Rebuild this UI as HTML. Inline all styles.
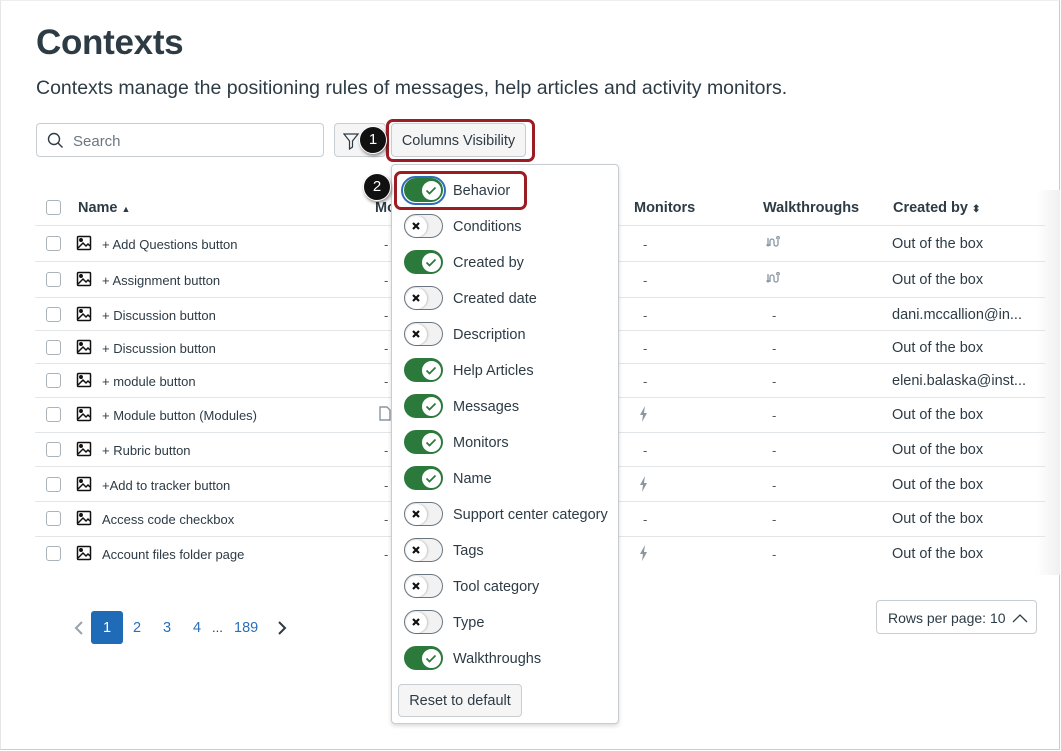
<!DOCTYPE html>
<html><head><meta charset="utf-8">
<style>
*{box-sizing:border-box;margin:0;padding:0}
body{width:1061px;height:751px;background:#fff;font-family:"Liberation Sans",sans-serif;color:#2d3b45;position:relative;overflow:hidden}
.frame{position:absolute;left:0;top:0;width:1060px;height:750px;border:1px solid #c7cdd1;border-left-color:#e6e6e6;border-top-color:#eee}
.a{position:absolute}
h1{position:absolute;left:36px;top:23px;font-size:35px;font-weight:bold;color:#2d3b45;letter-spacing:-0.3px}
.sub{left:36px;top:77px;font-size:19.5px;color:#2d3b45}
.search{left:36px;top:123px;width:288px;height:34px;border:1px solid #c7cdd1;border-radius:4px}
.search span{position:absolute;left:36px;top:9px;font-size:15px;color:#6b7780}
.btn{border:1px solid #c7cdd1;background:#f5f5f5;border-radius:4px;font-size:14.5px;color:#2d3b45;text-align:center}
.red{border:3px solid #9b1c22;border-radius:7px}
.badge{width:28px;height:28px;border-radius:50%;background:#111;color:#fff;font-size:15px;text-align:center;line-height:26px;box-shadow:1px 2px 3px rgba(0,0,0,.45);border:1.5px solid #fff}
.hd{font-size:14.5px;font-weight:bold;color:#2d3b45}
.sep{left:35px;width:1010px;height:1px;background:#e3e6e8}
.cb{left:46px;width:15px;height:15px;border:1px solid #aab3b9;border-radius:3px}
.cell{font-size:13px;color:#2d3b45}
.cb2{font-size:14.5px;color:#2d3b45}
.dash{font-size:13px;color:#555}
.menu{left:391px;top:164px;width:228px;height:560px;background:#fff;border:1px solid #c7cdd1;border-radius:4px;box-shadow:0 2px 4px rgba(0,0,0,.15)}
.tg{left:404px;width:39px;height:24px;border-radius:12px}
.on{background:#2b7a3b}
.off{background:#f2f2f2;border:1.5px solid #6b7780}
.knob{position:absolute;width:21px;height:21px;border-radius:50%;background:#fff;top:1.5px}
.on .knob{right:1.5px;border:1px solid #2b7a3b}
.off .knob{left:1px;top:0.5px;box-shadow:1px 0 2px rgba(0,0,0,.2)}
.lbl{left:453px;font-size:14.5px;color:#2d3b45}
.pg{font-size:14.5px;color:#2b6fba}
</style></head><body>
<div class="frame"></div>
<h1>Contexts</h1>
<div class="a sub">Contexts manage the positioning rules of messages, help articles and activity monitors.</div>
<div class="a search"><svg class="a" style="left:10px;top:8px" width="17" height="17" viewBox="0 0 17 17"><circle cx="7" cy="7" r="5.5" fill="none" stroke="#2d3b45" stroke-width="1.4"/><path d="M11 11l4.5 4.5" stroke="#2d3b45" stroke-width="1.4"/></svg><span>Search</span></div>
<div class="a btn" style="left:334px;top:123px;width:52px;height:34px"><svg class="a" style="left:8px;top:8px" width="16" height="18" viewBox="0 0 16 18"><path d="M1 2h14l-5.5 7v6l-3 2V9z" fill="none" stroke="#2d3b45" stroke-width="1.2"/></svg></div>
<div class="a red" style="left:386px;top:119px;width:149px;height:43px"></div>
<div class="a btn" style="left:391px;top:123px;width:135px;height:34px;line-height:34px">Columns Visibility</div>
<div class="a badge" style="left:359px;top:126px">1</div>

<div class="a hd" style="left:78px;top:200px">Name <span style="font-size:9px">▲</span></div>
<div class="a hd" style="left:375px;top:200px">Mo</div>
<div class="a hd" style="left:634px;top:200px">Monitors</div>
<div class="a hd" style="left:763px;top:200px">Walkthroughs</div>
<div class="a hd" style="left:893px;top:200px">Created by <span style="font-size:10px">⬍</span></div>
<div class="a" style="left:1036px;top:190px;width:24px;height:385px;background:linear-gradient(90deg,rgba(240,240,240,0),#f0f0f0)"></div>
<div class="a cb" style="top:200px"></div>

<div class="a sep" style="top:225px"></div><div class="a sep" style="top:261px"></div><div class="a sep" style="top:297px"></div><div class="a sep" style="top:330px"></div><div class="a sep" style="top:363px"></div><div class="a sep" style="top:397px"></div><div class="a sep" style="top:432px"></div><div class="a sep" style="top:466px"></div><div class="a sep" style="top:501px"></div><div class="a sep" style="top:536px"></div>

<div class="a cb" style="top:236px"></div><div class="a cell" style="left:102px;top:237px">+ Add Questions button</div>
<div class="a cb" style="top:272px"></div><div class="a cell" style="left:102px;top:273px">+ Assignment button</div>
<div class="a cb" style="top:307px"></div><div class="a cell" style="left:102px;top:308px">+ Discussion button</div>
<div class="a cb" style="top:340px"></div><div class="a cell" style="left:102px;top:341px">+ Discussion button</div>
<div class="a cb" style="top:373px"></div><div class="a cell" style="left:102px;top:374px">+ module button</div>
<div class="a cb" style="top:407px"></div><div class="a cell" style="left:102px;top:408px">+ Module button (Modules)</div>
<div class="a cb" style="top:442px"></div><div class="a cell" style="left:102px;top:443px">+ Rubric button</div>
<div class="a cb" style="top:477px"></div><div class="a cell" style="left:102px;top:478px">+Add to tracker button</div>
<div class="a cb" style="top:511px"></div><div class="a cell" style="left:102px;top:512px">Access code checkbox</div>
<div class="a cb" style="top:546px"></div><div class="a cell" style="left:102px;top:547px">Account files folder page</div>

<svg class="a" style="left:76px;top:235px" width="16" height="330" viewBox="0 0 16 330">
<defs><g id="im" fill="none" stroke="#111" stroke-width="1.5"><rect x="1.5" y="1.5" width="13" height="13" rx="1"/><path d="M2 13l5-5 3 3 2-2 2 2"/><circle cx="5" cy="5" r="1.2" fill="#111"/></g></defs>
<use href="#im" y="0"/><use href="#im" y="36"/><use href="#im" y="71"/><use href="#im" y="104"/><use href="#im" y="137"/><use href="#im" y="171"/><use href="#im" y="206"/><use href="#im" y="241"/><use href="#im" y="275"/><use href="#im" y="310"/>
</svg>

<div class="a dash" style="left:384px;top:237px">-</div><div class="a dash" style="left:384px;top:273px">-</div><div class="a dash" style="left:384px;top:308px">-</div><div class="a dash" style="left:384px;top:341px">-</div><div class="a dash" style="left:384px;top:374px">-</div><div class="a dash" style="left:384px;top:443px">-</div><div class="a dash" style="left:384px;top:478px">-</div><div class="a dash" style="left:384px;top:512px">-</div><div class="a dash" style="left:384px;top:547px">-</div>
<svg class="a" style="left:379px;top:406px" width="12" height="15"><path d="M1 1h7l3 3v10H1z" fill="none" stroke="#8a96a0" stroke-width="1.4"/></svg>

<div class="a dash" style="left:643px;top:237px">-</div><div class="a dash" style="left:643px;top:273px">-</div><div class="a dash" style="left:643px;top:308px">-</div><div class="a dash" style="left:643px;top:341px">-</div><div class="a dash" style="left:643px;top:374px">-</div><div class="a dash" style="left:643px;top:443px">-</div><div class="a dash" style="left:643px;top:512px">-</div>
<svg class="a" style="left:639px;top:406px" width="10" height="160" viewBox="0 0 10 160"><defs><path id="bolt" fill="#8a96a0" d="M6 0L1 9h3l-1 7 5-9H5z"/></defs><use href="#bolt"/><use href="#bolt" y="70"/><use href="#bolt" y="139"/></svg>

<svg class="a" style="left:766px;top:235px" width="16" height="50" viewBox="0 0 16 50">
<defs><path id="wk" fill="none" stroke="#8a96a0" stroke-width="1.3" d="M2 3v8M0.5 9.5L2 11l1.5-1.5M4 11V6a2 2 0 0 1 4 0v3a2 2 0 0 0 4 0V5M12 1.5a1.3 1.3 0 1 1 0 2.6a1.3 1.3 0 1 1 0-2.6"/></defs>
<use href="#wk"/><use href="#wk" y="36"/></svg>
<div class="a dash" style="left:772px;top:308px">-</div><div class="a dash" style="left:772px;top:341px">-</div><div class="a dash" style="left:772px;top:374px">-</div><div class="a dash" style="left:772px;top:408px">-</div><div class="a dash" style="left:772px;top:443px">-</div><div class="a dash" style="left:772px;top:478px">-</div><div class="a dash" style="left:772px;top:512px">-</div><div class="a dash" style="left:772px;top:547px">-</div>

<div class="a cb2" style="left:892px;top:236px">Out of the box</div>
<div class="a cb2" style="left:892px;top:272px">Out of the box</div>
<div class="a cb2" style="left:892px;top:307px">dani.mccallion@in...</div>
<div class="a cb2" style="left:892px;top:340px">Out of the box</div>
<div class="a cb2" style="left:892px;top:373px">eleni.balaska@inst...</div>
<div class="a cb2" style="left:892px;top:407px">Out of the box</div>
<div class="a cb2" style="left:892px;top:442px">Out of the box</div>
<div class="a cb2" style="left:892px;top:477px">Out of the box</div>
<div class="a cb2" style="left:892px;top:511px">Out of the box</div>
<div class="a cb2" style="left:892px;top:546px">Out of the box</div>

<svg class="a" style="left:74px;top:620px" width="10" height="16"><path d="M8 2L2 8l6 6" fill="none" stroke="#9aa3a9" stroke-width="2"/></svg>
<div class="a" style="left:91px;top:611px;width:32px;height:33px;background:#1f6bb8;border-radius:3px;color:#fff;font-size:14.5px;text-align:center;line-height:34px">1</div>
<div class="a pg" style="left:133px;top:620px">2</div>
<div class="a pg" style="left:163px;top:620px">3</div>
<div class="a pg" style="left:193px;top:620px">4</div>
<div class="a" style="left:212px;top:620px;font-size:13px;color:#2d3b45">...</div>
<div class="a pg" style="left:234px;top:620px">189</div>
<svg class="a" style="left:277px;top:620px" width="10" height="16"><path d="M2 2l6 6-6 6" fill="none" stroke="#2d3b45" stroke-width="2"/></svg>
<div class="a" style="left:876px;top:600px;width:161px;height:34px;border:1px solid #c7cdd1;border-radius:4px;font-size:14px;line-height:34px;padding-left:11px">Rows per page: 10 <svg style="position:absolute;left:135px;top:12px" width="16" height="10"><path d="M1 9l7-7 7 7" fill="none" stroke="#2d3b45" stroke-width="1.3"/></svg></div>

<div class="a menu"></div>
<div class="a red" style="left:394px;top:171px;width:133px;height:39px"></div>
<div class="a" style="left:401px;top:176px;width:45px;height:29px;border:2px solid #2b6fba;border-radius:15px"></div>
<div class="a badge" style="left:363px;top:173px">2</div>

<div class="a tg on" style="top:178px"><div class="knob"></div></div><div class="a lbl" style="top:183px">Behavior</div>
<div class="a tg off" style="top:214px"><div class="knob"></div></div><div class="a lbl" style="top:219px">Conditions</div>
<div class="a tg on" style="top:250px"><div class="knob"></div></div><div class="a lbl" style="top:255px">Created by</div>
<div class="a tg off" style="top:286px"><div class="knob"></div></div><div class="a lbl" style="top:291px">Created date</div>
<div class="a tg off" style="top:322px"><div class="knob"></div></div><div class="a lbl" style="top:327px">Description</div>
<div class="a tg on" style="top:358px"><div class="knob"></div></div><div class="a lbl" style="top:363px">Help Articles</div>
<div class="a tg on" style="top:394px"><div class="knob"></div></div><div class="a lbl" style="top:399px">Messages</div>
<div class="a tg on" style="top:430px"><div class="knob"></div></div><div class="a lbl" style="top:435px">Monitors</div>
<div class="a tg on" style="top:466px"><div class="knob"></div></div><div class="a lbl" style="top:471px">Name</div>
<div class="a tg off" style="top:502px"><div class="knob"></div></div><div class="a lbl" style="top:507px">Support center category</div>
<div class="a tg off" style="top:538px"><div class="knob"></div></div><div class="a lbl" style="top:543px">Tags</div>
<div class="a tg off" style="top:574px"><div class="knob"></div></div><div class="a lbl" style="top:579px">Tool category</div>
<div class="a tg off" style="top:610px"><div class="knob"></div></div><div class="a lbl" style="top:615px">Type</div>
<div class="a tg on" style="top:646px"><div class="knob"></div></div><div class="a lbl" style="top:651px">Walkthroughs</div>

<svg class="a" style="left:404px;top:178px" width="40" height="500" viewBox="0 0 40 500">
<defs>
<path id="ck" fill="none" stroke="#2b7a3b" stroke-width="1.7" d="M22.5 12.5l3 3 6-6"/>
<path id="xx" fill="none" stroke="#111" stroke-width="2.2" d="M9 9l6 6M15 9l-6 6"/>
</defs>
<use href="#ck" y="0"/><use href="#ck" y="72"/><use href="#ck" y="180"/><use href="#ck" y="216"/><use href="#ck" y="252"/><use href="#ck" y="288"/><use href="#ck" y="468"/>
<use href="#xx" y="36"/><use href="#xx" y="108"/><use href="#xx" y="144"/><use href="#xx" y="324"/><use href="#xx" y="360"/><use href="#xx" y="396"/><use href="#xx" y="432"/>
</svg>

<div class="a btn" style="left:398px;top:684px;width:124px;height:33px;line-height:33px">Reset to default</div>
</body></html>
